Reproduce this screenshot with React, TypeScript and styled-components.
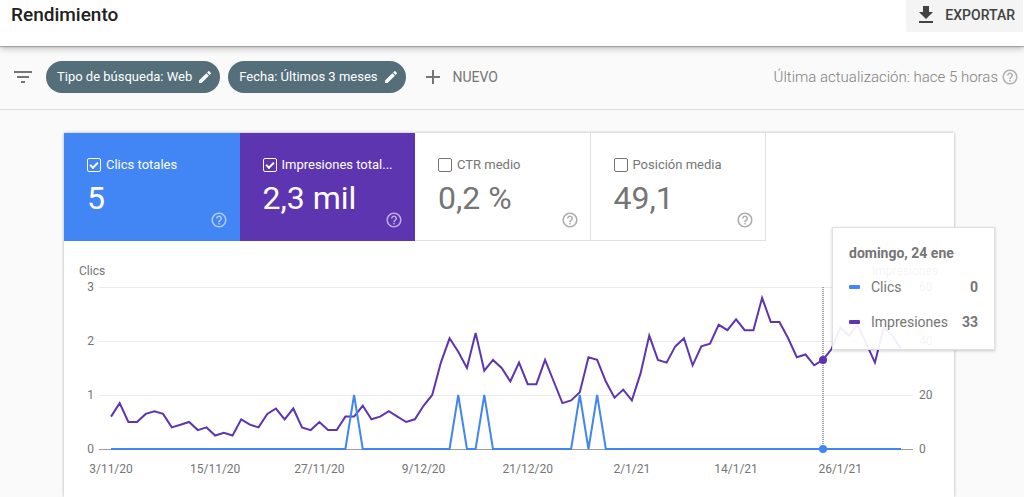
import React, { useLayoutEffect, useRef, useState } from "react";
import styled, { createGlobalStyle } from "styled-components";
import { MdAdd, MdEdit, MdFileDownload, MdFilterList, MdHelpOutline } from "react-icons/md";

const GlobalStyle = createGlobalStyle`
  *, *::before, *::after { box-sizing: border-box; }
  body {
    margin: 0;
    background: #fafafa;
    color: #757575;
    font-family: Roboto, "Liberation Sans", sans-serif;
    font-size: 14px;
  }
  button, input { font: inherit; margin: 0; }
`;

const Page = styled.div`
  display: flex;
  flex-direction: column;
  min-height: 100vh;
  overflow-x: hidden;
`;

const Header = styled.header`
  position: relative;
  display: flex;
  justify-content: space-between;
  align-items: flex-start;
  height: 46px;
  padding: 0 1px 0 11px;
  background: #fff;
  box-shadow: 0 1px 1px rgba(0, 0, 0, 0.22), 0 2px 7px rgba(0, 0, 0, 0.28);
`;

const Title = styled.h1`
  margin: 0;
  color: #212121;
  font-size: 19px;
  font-weight: 500;
  line-height: 30px;
`;

const ExportButton = styled.button`
  display: flex;
  align-items: center;
  gap: 7px;
  height: 32px;
  padding: 0 8px 2px;
  border: 0;
  border-radius: 0 0 2px 2px;
  background: #f4f4f4;
  color: #424242;
  font-size: 14px;
  font-weight: 500;
  letter-spacing: 0;
  cursor: pointer;
`;

const FilterBar = styled.section`
  display: flex;
  align-items: center;
  height: 64px;
  padding: 0 5px 2px 11px;
  border-bottom: 1px solid #dcdcdc;
`;

const IconButton = styled.button`
  display: flex;
  padding: 0;
  border: 0;
  background: none;
  color: inherit;
  cursor: pointer;
`;

const HelpButton = styled(IconButton)`
  opacity: 0.6;
`;

const Chips = styled.div`
  display: flex;
  gap: 8px;
  margin-left: 11px;
`;

const Chip = styled.button`
  display: flex;
  align-items: center;
  gap: 5px;
  height: 32px;
  padding: 0 7px 0 11px;
  border: 0;
  border-radius: 16px;
  background: #546e7a;
  color: #fff;
  font-size: 13px;
  white-space: nowrap;
  cursor: pointer;
`;

const NewButton = styled(IconButton)`
  align-items: center;
  gap: 8px;
  margin-left: 15px;
  font-size: 14px;
`;

const Updated = styled.div`
  display: flex;
  align-items: center;
  gap: 3px;
  margin-left: auto;
  color: #808080;
  font-size: 15px;
  font-weight: 300;
  white-space: nowrap;
`;

const Main = styled.main`
  display: flex;
  flex: 1;
  flex-direction: column;
  padding: 23px 70px 0 64px;
`;

const Card = styled.section`
  flex: 1;
  background: #fff;
  box-shadow: 0 0 3px rgba(0, 0, 0, 0.3);
`;

const Tiles = styled.div`
  display: grid;
  grid-template-columns: repeat(4, minmax(0, 1fr));
  max-width: 702px;
`;

const Tile = styled.div<{ $fill?: string }>`
  display: flex;
  flex-direction: column;
  height: 108px;
  padding: 22px 11px 11px 23px;
  border-right: 1px solid ${(p) => p.$fill ?? "#e0e0e0"};
  border-bottom: 1px solid ${(p) => p.$fill ?? "#e0e0e0"};
  background: ${(p) => p.$fill ?? "#fff"};
  color: ${(p) => (p.$fill ? "#fff" : "#757575")};
`;

const TileLabel = styled.label`
  display: flex;
  align-items: center;
  gap: 5px;
  font-size: 13px;
  line-height: 20px;
  white-space: nowrap;
`;

const Check = styled.input`
  appearance: none;
  display: grid;
  place-items: center;
  flex: none;
  width: 14px;
  height: 14px;
  border: 1px solid currentColor;
  border-radius: 2px;
  color: inherit;

  &:checked::after {
    content: "";
    width: 8px;
    height: 5px;
    margin-bottom: 2px;
    border: solid currentColor;
    border-width: 0 0 2px 2px;
    transform: rotate(-45deg);
  }
`;

const TileBody = styled.div`
  display: flex;
  flex: 1;
  justify-content: space-between;
  align-items: flex-end;
`;

const TileValue = styled.div`
  align-self: flex-start;
  padding-top: 4px;
  font-size: 32px;
  line-height: 38px;
  white-space: nowrap;
`;

const ChartArea = styled.div`
  position: relative;
  height: 250px;
`;

const ChartSvg = styled.svg`
  display: block;
  width: 100%;
  height: 100%;

  text {
    fill: #757575;
    font-size: 12px;
  }
`;

const Tooltip = styled.div`
  position: absolute;
  top: -14px;
  width: 163px;
  height: 123px;
  padding: 15px 16px;
  border: 1px solid #e0e0e0;
  background: rgba(255, 255, 255, 0.92);
  box-shadow: 0 1px 3px rgba(0, 0, 0, 0.2);
`;

const TooltipTitle = styled.div`
  margin-bottom: 6px;
  font-weight: 700;
  line-height: 20px;
  white-space: nowrap;
`;

const TooltipRow = styled.div`
  display: flex;
  align-items: center;
  height: 35px;
`;

const Swatch = styled.span<{ $color: string }>`
  width: 11px;
  height: 4px;
  margin-right: 11px;
  border-radius: 1px;
  background: ${(p) => p.$color};
`;

const TooltipValue = styled.strong`
  margin-left: auto;
`;

const BLUE = "#4285f4";
const PURPLE = "#5e35b1";

const impressions = [
  12, 17, 10, 10, 13, 14, 13, 8, 9, 10, 7, 8, 5, 6, 5, 11, 9, 8, 13, 15, 11, 15, 8, 7, 10, 7, 7, 12,
  12, 16, 11, 12, 14, 12, 10, 11, 16, 20, 32, 41, 36, 30, 43, 29, 33, 30, 25, 32, 24, 24, 33, 25,
  17, 18, 21, 34, 33, 25, 19, 22, 18, 28, 42, 33, 32, 38, 41, 31, 38, 39, 46, 44, 48, 44, 44, 56,
  47, 47, 41, 34, 35, 31, 33, 37, 45, 42, 46, 39, 32, 45, 42, 37,
];
const clickDays = [28, 40, 43, 54, 56];
const dates = ["3/11/20", "15/11/20", "27/11/20", "9/12/20", "21/12/20", "2/1/21", "14/1/21", "26/1/21"];
const selected = 82;

const tiles = [
  { id: "clics", label: "Clics totales", value: "5", fill: BLUE },
  { id: "impresiones", label: "Impresiones total...", value: "2,3 mil", fill: PURPLE },
  { id: "ctr", label: "CTR medio", value: "0,2 %" },
  { id: "posicion", label: "Posición media", value: "49,1" },
];

function Chart() {
  const area = useRef<HTMLDivElement>(null);
  const [width, setWidth] = useState(890);

  useLayoutEffect(() => {
    const el = area.current;
    if (!el) return;
    const measure = () => setWidth(el.clientWidth);
    measure();
    const observer = new ResizeObserver(measure);
    observer.observe(el);
    return () => observer.disconnect();
  }, []);

  const base = 208;
  const left = 47;
  const step = (width - 53 - left) / (impressions.length - 1);
  const x = (day: number) => left + day * step;
  const y = (value: number) => base - value * 2.7;
  const points = (values: number[]) => values.map((v, i) => `${x(i)},${y(v)}`).join(" ");
  const clicks = impressions.map((_, i) => (clickDays.includes(i) ? 20 : 0));
  const cursor = Math.round(x(selected));

  return (
    <ChartArea ref={area}>
      <ChartSvg role="img" aria-label="Clics e impresiones por día">
        <text x={15} y={34}>Clics</text>
        <text x={width - 16} y={34} textAnchor="end">Impresiones</text>
        {[0, 1, 2, 3].map((n) => (
          <g key={n}>
            <rect x={35} y={base - n * 54} width={width - 76} height={1} fill={n ? "#ebebeb" : "#9e9e9e"} />
            <text x={30} y={base + 4 - n * 54} textAnchor="end">{n}</text>
            <text x={width - 35} y={base + 4 - n * 54}>{n * 20}</text>
          </g>
        ))}
        {dates.map((d, i) => (
          <text key={d} x={x(i * 12)} y={232} textAnchor="middle">{d}</text>
        ))}
        <g fill="none" strokeWidth={2}>
          <polyline points={points(impressions)} stroke={PURPLE} />
          <polyline points={points(clicks)} stroke={BLUE} />
        </g>
        <path d={`M${cursor} 46V${base}`} stroke="#9e9e9e" strokeWidth={2} strokeDasharray="1 1" />
        <circle cx={cursor} cy={y(impressions[selected])} r={4} fill={PURPLE} />
        <circle cx={cursor} cy={base} r={4} fill={BLUE} />
      </ChartSvg>
      <Tooltip style={{ left: cursor + 9 }}>
        <TooltipTitle>domingo, 24 ene</TooltipTitle>
        <TooltipRow>
          <Swatch $color={BLUE} />
          Clics
          <TooltipValue>0</TooltipValue>
        </TooltipRow>
        <TooltipRow>
          <Swatch $color={PURPLE} />
          Impresiones
          <TooltipValue>33</TooltipValue>
        </TooltipRow>
      </Tooltip>
    </ChartArea>
  );
}

export default function App() {
  return (
    <Page>
      <GlobalStyle />
      <Header>
        <Title>Rendimiento</Title>
        <ExportButton>
          <MdFileDownload size={24} />
          EXPORTAR
        </ExportButton>
      </Header>
      <FilterBar>
        <IconButton aria-label="Filtrar">
          <MdFilterList size={24} />
        </IconButton>
        <Chips>
          <Chip>
            Tipo de búsqueda: Web
            <MdEdit size={16} />
          </Chip>
          <Chip>
            Fecha: Últimos 3 meses
            <MdEdit size={16} />
          </Chip>
        </Chips>
        <NewButton>
          <MdAdd size={24} />
          NUEVO
        </NewButton>
        <Updated>
          Última actualización: hace 5 horas
          <HelpButton aria-label="Ayuda">
            <MdHelpOutline size={18} />
          </HelpButton>
        </Updated>
      </FilterBar>
      <Main>
        <Card>
          <Tiles>
            {tiles.map((t) => (
              <Tile key={t.id} $fill={t.fill}>
                <TileLabel htmlFor={t.id}>
                  <Check id={t.id} type="checkbox" defaultChecked={Boolean(t.fill)} />
                  {t.label}
                </TileLabel>
                <TileBody>
                  <TileValue>{t.value}</TileValue>
                  <HelpButton aria-label={`Ayuda: ${t.label}`}>
                    <MdHelpOutline size={18} />
                  </HelpButton>
                </TileBody>
              </Tile>
            ))}
          </Tiles>
          <Chart />
        </Card>
      </Main>
    </Page>
  );
}
